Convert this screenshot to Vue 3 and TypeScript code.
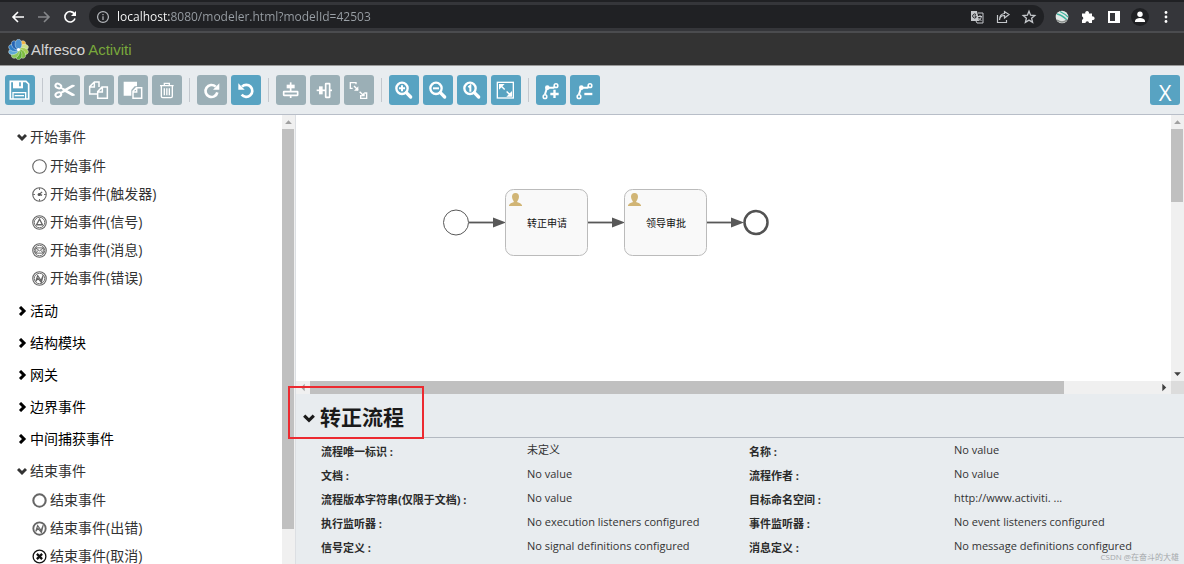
<script setup lang="ts">
import { ref } from 'vue'

interface Tool {
  name: string
  on: boolean
  art: string
}
interface StencilItem {
  label: string
  icon: string
}
interface Group {
  title: string
  open: boolean
  items: StencilItem[]
}

const url = ref('localhost:8080/modeler.html?modelId=42503')
const panelOpen = ref(true)

const lens = '<circle cx="39" cy="40" r="17" stroke-width="7"/><path d="M52 53L65 66" stroke-width="10" stroke-linecap="round"/>'
const bend =
  '<path d="M27 58L33 38H53L57 34" stroke-width="6"/><circle cx="27" cy="65" r="5.500" stroke-width="4.500"/><circle cx="60" cy="32" r="5.500" stroke-width="4.500"/><circle cx="34" cy="38" r="7" fill="#fff" stroke="none"/>'

const toolGroups: Tool[][] = [
  [
    {
      name: '保存',
      on: true,
      art: '<path d="M16 19H63L71 27V72H16Z" stroke-width="5"/><path d="M24 19H54V40H24Z" fill="#fff" stroke="none"/><path d="M45 22V34" stroke="#58a3c2" stroke-width="5"/><path d="M24 72V53H62V72" stroke-width="4"/><path d="M29 62H57" stroke-width="4"/>',
    },
  ],
  [
    {
      name: '剪切',
      on: false,
      art: '<ellipse cx="25" cy="33" rx="9" ry="6.500" stroke-width="6" transform="rotate(25 25 33)"/><ellipse cx="25" cy="59" rx="9" ry="6.500" stroke-width="6" transform="rotate(-25 25 59)"/><path d="M33 36L45 41L66 29L74 30V34L52 46L74 58V62L66 63L45 51L33 56L31 52L39 46L31 40Z" fill="#fff" stroke="none"/>',
    },
    {
      name: '复制',
      on: false,
      art: '<path d="M39 57H17V35L31 21H45V36M31 22V36H18" stroke-width="4.500"/><path d="M54 36H70V70H41V50Z M55 37V51H42" stroke-width="4.500"/>',
    },
    {
      name: '粘贴',
      on: false,
      art: '<path d="M17 20H57V34H50L40 45V62H17Z" fill="#fff" stroke="none"/><path d="M55 38H71V70H45V49Z M56 39V51H46" stroke-width="4.500"/>',
    },
    {
      name: '删除',
      on: false,
      art: '<path d="M24 32H65M37 31V25H52V31M28 33V64Q28 68 32 68H57Q61 68 61 64V33M37 40V61M44.500 40V61M52 40V61" stroke-width="4"/>',
    },
  ],
  [
    {
      name: '重做',
      on: false,
      art: '<path d="M56 35A18 18 0 1 0 61 52" stroke-width="8"/><path d="M67 25V44H48Z" fill="#fff" stroke="none"/>',
    },
    {
      name: '撤销',
      on: true,
      art: '<path d="M33 35A18 18 0 1 1 32 59" stroke-width="8"/><path d="M22 25V44H41Z" fill="#fff" stroke="none"/>',
    },
  ],
  [
    {
      name: '垂直对齐',
      on: false,
      art: '<path d="M44 22V69" stroke-width="5"/><path d="M32 29H56V40H32Z" fill="#fff" stroke="none"/><rect x="23" y="50" width="42" height="11" rx="1" fill="#9bafb6" stroke-width="5"/>',
    },
    {
      name: '水平对齐',
      on: false,
      art: '<path d="M20 46H66" stroke-width="5"/><path d="M27 34H38V58H27Z" fill="#fff" stroke="none"/><rect x="47" y="26" width="12" height="41" rx="1" fill="#9bafb6" stroke-width="5"/>',
    },
    {
      name: '相同大小',
      on: false,
      art: '<path d="M26 40H19V23H36V28M50 60V70H68V54H62" stroke-width="4"/><path d="M30 33L42 45" stroke-width="4"/><path d="M43 34V47H30Z" fill="#fff" stroke="none"/><path d="M47 50L57 60" stroke-width="4"/><path d="M62 51V64H49Z" fill="#fff" stroke="none"/>',
    },
  ],
  [
    { name: '放大', on: true, art: lens + '<path d="M30 40H48M39 31V49" stroke-width="6"/>' },
    { name: '缩小', on: true, art: lens + '<path d="M30 40H48" stroke-width="6"/>' },
    { name: '实际大小', on: true, art: lens + '<path d="M34 37L40 32V50" stroke-width="6"/>' },
    {
      name: '适合窗口',
      on: true,
      art: '<rect x="19" y="22" width="48" height="47" stroke-width="4"/><path d="M31 34L57 59" stroke-width="4.500" stroke-dasharray="14 8"/><path d="M24 27H41L24 44ZM63 65H46L63 48Z" fill="#fff" stroke="none"/>',
    },
  ],
  [
    { name: '添加弯曲点', on: true, art: bend + '<path d="M43 57H68M55.500 44V69" stroke-width="7"/>' },
    { name: '移除弯曲点', on: true, art: bend + '<path d="M43 57H67" stroke-width="7"/>' },
  ],
]

const thin = '<circle cx="20" cy="20" r="18" stroke-width="3"/>'
const twin = thin + '<circle cx="20" cy="20" r="14" stroke-width="2.500"/>'
const bolt = '<path d="M10 28L15 12L24 25L30 11L25 31L16 20Z" stroke-width="3"/>'

const groups = ref<Group[]>([
  {
    title: '开始事件',
    open: true,
    items: [
      { label: '开始事件', icon: thin },
      {
        label: '开始事件(触发器)',
        icon: thin + '<path d="M20 3V8M20 32V37M3 20H8M32 20H37" stroke-width="2.500"/><path d="M27 13L19 20L27 22" stroke-width="3.500"/><circle cx="19" cy="20" r="4" fill="#555" stroke="none"/>',
      },
      { label: '开始事件(信号)', icon: twin + '<path d="M20 11L28 26H12Z" stroke-width="3.500"/>' },
      {
        label: '开始事件(消息)',
        icon: twin + '<path d="M10 13H30V27H10ZM10 13L20 21L30 13M10 27L17 19M30 27L23 19" stroke-width="2.500"/>',
      },
      { label: '开始事件(错误)', icon: twin + bolt },
    ],
  },
  { title: '活动', open: false, items: [] },
  { title: '结构模块', open: false, items: [] },
  { title: '网关', open: false, items: [] },
  { title: '边界事件', open: false, items: [] },
  { title: '中间捕获事件', open: false, items: [] },
  {
    title: '结束事件',
    open: true,
    items: [
      { label: '结束事件', icon: '<circle cx="20" cy="20" r="16.500" stroke-width="5.500"/>' },
      { label: '结束事件(出错)', icon: '<circle cx="20" cy="20" r="16.500" stroke-width="5"/>' + bolt },
      {
        label: '结束事件(取消)',
        icon: '<g stroke="#111"><circle cx="20" cy="20" r="17" stroke-width="3.500"/><path d="M13 13L27 27M27 13L13 27" stroke-width="6"/></g>',
      },
    ],
  },
])

const properties: [string, string][] = [
  ['流程唯一标识 :', '未定义'],
  ['名称 :', 'No value'],
  ['文档 :', 'No value'],
  ['流程作者 :', 'No value'],
  ['流程版本字符串(仅限于文档) :', 'No value'],
  ['目标命名空间 :', 'http://www.activiti. ...'],
  ['执行监听器 :', 'No execution listeners configured'],
  ['事件监听器 :', 'No event listeners configured'],
  ['信号定义 :', 'No signal definitions configured'],
  ['消息定义 :', 'No message definitions configured'],
]

const tasks = [
  { x: 210, label: '转正申请' },
  { x: 329, label: '领导审批' },
]
const flows = [
  { from: 173, to: 210 },
  { from: 292, to: 329 },
  { from: 411, to: 448 },
]
const petals = ['#f2b23e', '#cfe08a', '#a6cf52', '#7fbf3f', '#62ad3a', '#8fc95a', '#5fa9d8', '#2f7fc8', '#2463b4', '#4a90d0']
</script>

<template>
  <div class="window">
    <div class="chrome">
      <button class="nav" aria-label="Back">
        <svg viewBox="0 0 16 16"><path d="M14 8H3M8 3L3 8L8 13" /></svg>
      </button>
      <button class="nav dim" aria-label="Forward">
        <svg viewBox="0 0 16 16"><path d="M2 8H13M8 3L13 8L8 13" /></svg>
      </button>
      <button class="nav" aria-label="Reload">
        <svg viewBox="0 0 16 16"><path d="M12.500 5A5.200 5.200 0 1 0 13 9.500" /><path d="M14 2V7H9Z" fill="#fff" stroke="none" /></svg>
      </button>
      <div class="omnibox">
        <svg class="info" viewBox="0 0 16 16"><circle cx="8" cy="8" r="6.200" /><path d="M8 7.200V11.500M8 4.500V6" /></svg>
        <input v-model="url" class="url" type="text" aria-label="Address" spellcheck="false" />
        <button class="mini" aria-label="Translate">
          <svg viewBox="0 0 16 16">
            <path d="M2 2H8L10 12H2Z" fill="#c4c7cb" stroke="none" />
            <path d="M9 4H14V14H8L7 12M9 7.500H13M11 6V7.500M12.500 7.500Q12 10 9.500 12M9.500 9L12.500 12" stroke-width="1" />
            <path d="M7 5.500A2 2 0 1 0 7 8.500V7H5.500" stroke="#202124" stroke-width="1" />
          </svg>
        </button>
        <button class="mini" aria-label="Share">
          <svg viewBox="0 0 16 16"><path d="M2.500 6V13.500H11.500V11M4.500 11Q5 6.500 9.500 6.500V9L14 5.500L9.500 2.500V4.500Q4.500 5 4.500 11Z" stroke-width="1.200" /></svg>
        </button>
        <button class="mini" aria-label="Bookmark">
          <svg viewBox="0 0 16 16"><path d="M8 2.200L9.600 6.200L13.800 6.500L10.600 9.200L11.600 13.400L8 11.100L4.400 13.400L5.400 9.200L2.200 6.500L6.400 6.200Z" stroke-width="1.300" /></svg>
        </button>
      </div>
      <div class="extensions">
        <button class="mini" aria-label="Extension">
          <svg viewBox="0 0 16 16">
            <circle cx="8" cy="8" r="6.300" fill="#e4e8e6" stroke="none" />
            <path d="M3 5Q8 6 13 11M6 2.500Q11 5 14 8" stroke="#3fb5a0" stroke-width="1.300" />
            <path d="M3 11Q8 15 13 11" stroke="#8a8f8d" />
          </svg>
        </button>
        <button class="mini" aria-label="Extensions">
          <svg viewBox="0 0 16 16">
            <path d="M2 4.500H5.300A1.900 1.900 0 1 1 8.900 4.500H12V7.500A1.900 1.900 0 1 1 12 11V14H9A1.700 1.700 0 0 0 5.500 14H2V10.800A1.700 1.700 0 0 0 2 7.500Z" fill="#fff" stroke="none" />
          </svg>
        </button>
        <button class="mini" aria-label="Side panel">
          <svg viewBox="0 0 16 16"><path d="M2 2H14V14H2ZM4 4V12H9V4Z" fill="#fff" fill-rule="evenodd" stroke="none" /></svg>
        </button>
        <button class="mini avatar" aria-label="Profile">
          <svg viewBox="0 0 16 16"><circle cx="8" cy="5.300" r="2.700" fill="#fff" stroke="none" /><path d="M3 13V11.500Q4 9 8 9T13 11.500V13Z" fill="#fff" stroke="none" /></svg>
        </button>
        <button class="mini" aria-label="Menu">
          <svg viewBox="0 0 16 16"><g fill="#fff" stroke="none"><circle cx="8" cy="3.500" r="1.400" /><circle cx="8" cy="8" r="1.400" /><circle cx="8" cy="12.500" r="1.400" /></g></svg>
        </button>
      </div>
    </div>

    <header class="brand">
      <svg class="flower" viewBox="0 0 40 40">
        <g v-for="(c, i) in petals" :key="i" :transform="`rotate(${i * 36 + 36} 20 20)`">
          <ellipse cx="20" cy="10" rx="6.500" ry="9.500" :fill="c" stroke="#e9f2ee" stroke-width="0.800" />
        </g>
        <circle cx="20" cy="20" r="3" fill="#fff" />
      </svg>
      <span class="alfresco">Alfresco</span>
      <span class="activiti">Activiti</span>
    </header>

    <div class="toolbar" role="toolbar">
      <div v-for="(tools, g) in toolGroups" :key="g" class="tool-group">
        <button v-for="t in tools" :key="t.name" class="tool" :class="{ on: t.on }" :aria-label="t.name">
          <svg viewBox="0 0 90 90" v-html="t.art"></svg>
        </button>
      </div>
      <button class="tool on close">X</button>
    </div>

    <div class="editor">
      <nav class="palette">
        <div class="stencils">
          <section v-for="grp in groups" :key="grp.title">
            <button class="group-head" :class="{ open: grp.open }" :aria-expanded="grp.open" @click="grp.open = !grp.open">
              <svg viewBox="0 0 10 10"><path :d="grp.open ? 'M1 3L5 7L9 3' : 'M3 1L7 5L3 9'" /></svg>
              <span>{{ grp.title }}</span>
            </button>
            <ul v-if="grp.open && grp.items.length">
              <li v-for="item in grp.items" :key="item.label">
                <svg viewBox="0 0 40 40" v-html="item.icon"></svg>
                <span>{{ item.label }}</span>
              </li>
            </ul>
          </section>
        </div>
        <div class="vbar">
          <i class="arrow up"></i>
          <div class="thumb side-thumb"></div>
        </div>
      </nav>

      <main class="work">
        <div class="stage">
          <svg class="diagram">
            <circle cx="160" cy="107.500" r="12.500" fill="#fff" stroke="#585858" />
            <g v-for="f in flows" :key="f.from">
              <path :d="`M${f.from} 107.500H${f.to - 10}`" stroke="#585858" stroke-width="1.800" />
              <path :d="`M${f.to - 13} 102.500L${f.to} 107.500L${f.to - 13} 112.500Z`" fill="#585858" />
            </g>
            <g v-for="t in tasks" :key="t.x" :transform="`translate(${t.x} 75)`">
              <rect x="-0.500" y="-0.500" width="82" height="66" rx="8" fill="#f9f9f9" stroke="#bbb" />
              <path d="M3 16V15Q4 13 8 12Q6 9 6 7Q6 3 9.500 3T13 7Q13 9 11 12Q15 13 16 15V16Z" fill="#d1b575" />
              <text x="41" y="37" text-anchor="middle" class="task-name">{{ t.label }}</text>
            </g>
            <circle cx="460" cy="107.500" r="11.500" fill="#fff" stroke="#525252" stroke-width="2.500" />
          </svg>
          <div class="vbar">
            <i class="arrow up"></i>
            <div class="thumb stage-thumb"></div>
            <i class="arrow down"></i>
          </div>
        </div>
        <div class="hbar">
          <i class="arrow left"></i>
          <div class="track"><div class="thumb stage-hthumb"></div></div>
          <i class="arrow right"></i>
          <div class="corner"></div>
        </div>

        <section class="props">
          <button class="props-head" :aria-expanded="panelOpen" @click="panelOpen = !panelOpen">
            <svg viewBox="0 0 10 10"><path :d="panelOpen ? 'M1 3L5 7L9 3' : 'M3 1L7 5L3 9'" /></svg>
            <span>转正流程</span>
          </button>
          <div class="marker"></div>
          <dl v-if="panelOpen" class="fields">
            <template v-for="[k, v] in properties" :key="k">
              <dt>{{ k }}</dt>
              <dd>{{ v }}</dd>
            </template>
          </dl>
          <div class="credit">CSDN @在奋斗的大雄</div>
        </section>
      </main>
    </div>
  </div>
</template>

<style>
body {
  margin: 0;
}
</style>

<style scoped>
.window {
  display: flex;
  flex-direction: column;
  height: 100vh;
  overflow: hidden;
  font-family: 'Open Sans', 'Noto Sans CJK SC', sans-serif;
  color: #333;
}
button {
  border: 0;
  padding: 0;
  background: none;
  font: inherit;
  color: inherit;
  cursor: pointer;
}
svg {
  display: block;
  flex: none;
  fill: none;
}

/* browser bar */
.chrome {
  display: flex;
  align-items: center;
  flex: none;
  height: 29px;
  padding: 0 10px;
  border-top: 2px solid #202124;
  border-bottom: 2px solid #4b4c4f;
  background: #35363a;
}
.nav {
  width: 16px;
  margin-right: 10px;
}
.nav svg,
.mini svg {
  width: 16px;
  height: 16px;
  stroke: #fff;
  stroke-width: 1.6;
}
.nav.dim svg {
  stroke: #85878a;
}
.omnibox {
  display: flex;
  align-items: center;
  flex: 1;
  height: 23px;
  margin-left: 1px;
  padding: 0 7px;
  border-radius: 12px;
  background: #202124;
}
.info {
  width: 14px;
  height: 14px;
  stroke: #b4b7bb;
  stroke-width: 1.4;
}
.url {
  flex: 1;
  min-width: 0;
  height: 20px;
  margin: 0 8px 0 7px;
  padding: 0;
  border: 0;
  outline: 0;
  font-family: 'Open Sans', sans-serif;
  font-size: 12px;
  color: transparent;
  background: linear-gradient(90deg, #fff 53px, #9aa0a6 53px);
  -webkit-background-clip: text;
  background-clip: text;
}
.mini + .mini {
  margin-left: 10px;
}
.omnibox .mini svg {
  stroke: #c4c7cb;
}
.extensions {
  display: flex;
  align-items: center;
  padding-left: 10px;
}
.avatar {
  border-radius: 50%;
  background: #202124;
  box-shadow: 0 0 0 1px #202124;
}

/* product header */
.brand {
  display: flex;
  align-items: center;
  flex: none;
  height: 32px;
  padding: 0 8px;
  border-bottom: 1px solid #999;
  background: #333;
  font-family: 'Liberation Sans', sans-serif;
  font-size: 15px;
}
.flower {
  width: 21px;
  height: 21px;
}
.alfresco {
  margin: 0 3px 0 2px;
  color: #d4d4d4;
}
.activiti {
  color: #79a83b;
}

/* toolbar */
.toolbar {
  display: flex;
  align-items: center;
  flex: none;
  height: 48px;
  padding: 0 4px 0 5px;
  border-bottom: 1px solid #b8bec8;
  background: #e8ecef;
}
.tool-group {
  display: flex;
  gap: 4px;
}
.tool-group + .tool-group::before {
  content: '';
  width: 1px;
  height: 24px;
  margin: 3px 3px 3px 7px;
  background: #c3c8ce;
}
.tool {
  width: 30px;
  height: 30px;
  border-radius: 3px;
  background: #9bafb6;
}
.tool.on {
  background: #58a3c2;
}
.tool svg {
  width: 30px;
  height: 30px;
  stroke: #fff;
}
.close {
  margin-left: auto;
  padding-top: 5px;
  font-size: 22px;
  line-height: 25px;
  color: #fff;
}

/* editor */
.editor {
  display: flex;
  flex: 1;
  min-height: 0;
}
.palette {
  display: flex;
  flex: none;
  width: 295px;
  border-right: 1px solid #dcdfe3;
}
.stencils {
  flex: 1;
  padding-top: 6px;
  overflow: hidden;
  font-size: 14px;
}
.group-head {
  display: flex;
  align-items: center;
  gap: 3px;
  height: 30px;
  margin-bottom: 2px;
  padding-left: 17px;
  color: #000;
}
.group-head.open {
  margin-bottom: 0;
  color: #333;
}
.group-head svg {
  width: 10px;
  height: 10px;
  margin-top: 2px;
  stroke: currentColor;
  stroke-width: 3;
}
ul {
  margin: 0 0 4px;
  padding: 0 0 0 32px;
  list-style: none;
}
li {
  display: flex;
  align-items: center;
  gap: 3px;
  height: 28px;
  white-space: nowrap;
}
li svg {
  width: 15px;
  height: 15px;
  margin-top: 2px;
  stroke: #666;
}

/* scroll bars */
.vbar {
  display: flex;
  flex-direction: column;
  flex: none;
  width: 13px;
  background: #f0f0f0;
}
.thumb {
  background: #c0c0c0;
}
.side-thumb {
  width: 12px;
  height: 89%;
}
.stage-thumb {
  width: 12px;
  height: 73px;
  margin-bottom: auto;
}
.hbar {
  display: flex;
  align-items: center;
  flex: none;
  height: 13px;
  background: #f0f0f0;
}
.track {
  flex: 1;
}
.stage-hthumb {
  width: 89%;
  height: 13px;
}
.corner {
  width: 13px;
  height: 13px;
  background: #dcdcdc;
}
.arrow {
  flex: none;
  width: 13px;
  height: 14px;
  background: #a0a0a0;
}
.arrow.up {
  clip-path: polygon(50% 38%, 76% 64%, 24% 64%);
}
.arrow.down {
  background: #404040;
  clip-path: polygon(24% 38%, 76% 38%, 50% 64%);
}
.arrow.left {
  width: 14px;
  clip-path: polygon(62% 24%, 62% 76%, 36% 50%);
}
.arrow.right {
  width: 14px;
  background: #404040;
  clip-path: polygon(38% 24%, 38% 76%, 66% 50%);
}

/* canvas */
.work {
  display: flex;
  flex-direction: column;
  flex: 1;
  min-width: 0;
}
.stage {
  display: flex;
  flex: 1;
  min-height: 0;
  background: #fff;
}
.diagram {
  flex: 1;
  min-width: 0;
  height: 100%;
}
.task-name {
  fill: #111;
  font-size: 10px;
}

/* properties */
.props {
  position: relative;
  flex: none;
  padding-bottom: 6px;
  background: #e8ecef;
}
.props-head {
  display: flex;
  align-items: center;
  gap: 5px;
  width: 100%;
  height: 44px;
  padding: 0 0 0 7px;
  border-bottom: 1px solid #b3b9c1;
  font-size: 21px;
  font-weight: 700;
  color: #1a1a1a;
}
.props-head svg {
  width: 12px;
  height: 12px;
  margin-top: 4px;
  stroke: #1a1a1a;
  stroke-width: 2.6;
}
.marker {
  position: absolute;
  top: -8px;
  left: -8px;
  width: 132px;
  height: 49px;
  border: 2px solid #ec2a30;
  pointer-events: none;
}
.fields {
  display: grid;
  grid-template-columns: 206fr 222fr 205fr 230fr;
  grid-auto-rows: 24px;
  margin: 0;
  padding-left: 25px;
  font-size: 11px;
  line-height: 24px;
  white-space: nowrap;
}
dt {
  padding-top: 2px;
  font-weight: 700;
  color: #2b2b2b;
}
dd {
  margin: 0;
}
.credit {
  position: absolute;
  right: 5px;
  bottom: 2px;
  font-size: 8px;
  line-height: 10px;
  color: #a5a8ab;
}
</style>
